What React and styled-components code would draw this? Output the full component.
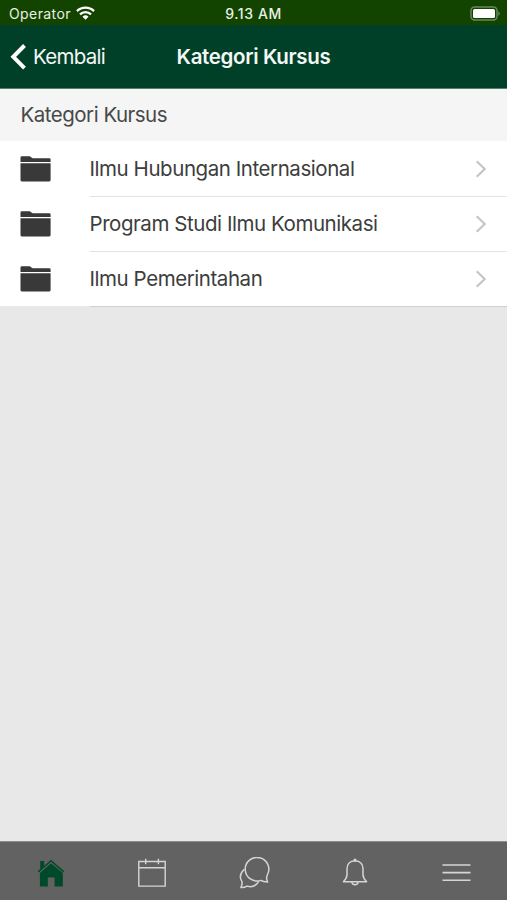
import React from 'react';
import styled, { createGlobalStyle } from 'styled-components';

const GlobalStyle = createGlobalStyle`
  * {
    box-sizing: border-box;
  }
  body {
    margin: 0;
    font-family: Inter, 'Liberation Sans', sans-serif;
    -webkit-font-smoothing: antialiased;
  }
`;

const Screen = styled.div`
  display: flex;
  flex-direction: column;
  height: 100vh;
  background-color: #e8e8e8;
`;

const StatusBar = styled.div`
  display: grid;
  grid-template-columns: 1fr auto 1fr;
  align-items: center;
  height: 25px;
  padding: 2px 7px 0 9px;
  background-color: #124400;
  color: #e9f0e5;
  flex-shrink: 0;
`;

const Carrier = styled.div`
  display: flex;
  align-items: center;
  gap: 5px;
  font-size: 14px;
  letter-spacing: 0.4px;

  svg {
    margin-top: -2px;
  }
`;

const Clock = styled.div`
  margin-left: -2px;
  font-size: 14px;
  font-weight: 500;
  letter-spacing: 0.6px;
`;

const Battery = styled.svg`
  justify-self: end;
  margin-top: -1px;
`;

const Header = styled.header`
  display: grid;
  grid-template-columns: 1fr auto 1fr;
  align-items: center;
  height: 64px;
  padding: 0 10px;
  background-color: #004028;
  border-bottom: 1px solid #557f70;
  color: #f3f7f5;
  flex-shrink: 0;
`;

const BackButton = styled.button`
  display: flex;
  align-items: center;
  justify-self: start;
  gap: 6px;
  padding: 0;
  border: none;
  background: none;
  color: inherit;
  font-family: inherit;
  font-size: 20.5px;
  letter-spacing: -0.72px;
`;

const Title = styled.h1`
  margin: 0;
  font-size: 20.5px;
  font-weight: 600;
  letter-spacing: -0.35px;
`;

const SectionTitle = styled.h2`
  display: flex;
  align-items: center;
  height: 52px;
  margin: 0;
  padding: 0 20.5px 1px;
  background-color: #f5f5f5;
  color: #484848;
  font-size: 20.5px;
  font-weight: 400;
  letter-spacing: -0.5px;
`;

const List = styled.ul`
  margin: 0;
  padding: 0;
  list-style: none;
  background-color: #fff;
`;

const RowBody = styled.div`
  display: flex;
  flex: 1;
  align-items: center;
  justify-content: space-between;
  padding-right: 20px;
  box-shadow: 0 1px 0 #e2e2e2;
  color: #3d3d3d;
  font-size: 20.5px;
  letter-spacing: -0.44px;
`;

const Row = styled.li`
  display: flex;
  height: 55px;
  padding-left: 20px;

  &:last-child ${RowBody} {
    box-shadow: 0 1px 0 #cfcfcf;
  }
`;

const RowIcon = styled.div`
  display: flex;
  align-items: center;
  width: 69.5px;
`;

const TabBar = styled.nav`
  display: flex;
  height: 59px;
  margin-top: auto;
  padding-top: 3px;
  border-top: 1px solid #8d8d8d;
  background-color: #626262;
`;

const Tab = styled.button`
  display: flex;
  flex: 1;
  align-items: center;
  justify-content: center;
  padding: 0;
  border: none;
  background: none;
  color: ${({ $active }) => ($active ? '#00492b' : '#d5d5d5')};
`;

const categories = [
  'Ilmu Hubungan Internasional',
  'Program Studi Ilmu Komunikasi',
  'Ilmu Pemerintahan',
];

const WifiIcon = () => (
  <svg width="19" height="14" viewBox="0 0 19 14" fill="none" stroke="#fff" strokeWidth="2.3">
    <path d="M1 5.1a12.2 12.2 0 0 1 17 0" />
    <path d="M4 8.4a7.8 7.8 0 0 1 11 0" />
    <path d="M9.5 13.8 6.5 10.8a4.3 4.3 0 0 1 6 0z" fill="#fff" stroke="none" />
  </svg>
);

const BatteryIcon = () => (
  <Battery width="30" height="15" viewBox="0 0 30 15">
    <rect x="1" y="1" width="26" height="13" rx="3.5" fill="none" stroke="#68875b" strokeWidth="1.5" />
    <rect x="3" y="3" width="22" height="9" rx="1.5" fill="#fff" />
    <path d="M28.3 5.2v4.6a2.5 2.5 0 0 0 0-4.6z" fill="#68875b" />
  </Battery>
);

const BackIcon = () => (
  <svg width="17" height="26" viewBox="0 0 17 26" fill="none" stroke="#fff" strokeWidth="4">
    <path d="M14.5 1.5 3.3 12.8l11.2 11.4" />
  </svg>
);

const FolderIcon = () => (
  <svg width="31" height="26" viewBox="0 0 31 26" fill="#393939">
    <path d="M.5 6V1.6Q.5.3 1.8.3h7.8q.7 0 1.2.6l1 .9q.4.4 1 .4h16.6q1.2 0 1.2 1.2V6z" />
    <path d="M.5 7.3h30.1v16.8q0 1.3-1.3 1.3H1.8Q.5 25.4.5 24.1z" />
  </svg>
);

const ChevronIcon = () => (
  <svg width="12" height="18" viewBox="0 0 12 18" fill="none" stroke="#c4c4c6" strokeWidth="2.1">
    <path d="m1.7 1.2 8 7.8-8 7.8" />
  </svg>
);

const HomeIcon = () => (
  <svg width="28" height="30" viewBox="0 0 28 30" fill="currentColor">
    <path d="M3.2 3h4v4.7L14 1.8l13.3 11.5-1 1.1L14 3.8 1.8 14.4l-1.1-1.1 2.5-2.2z" />
    <path d="M14 5.2 25.8 15v13.4h-8.2v-9h-6.8v9H2.9V15z" />
  </svg>
);

const CalendarIcon = () => (
  <svg width="28" height="30" viewBox="0 0 28 30" fill="none" stroke="currentColor" strokeWidth="1.4">
    <path d="M.8 3.5h26.4v24.6H.8zM.8 9.8h26.4M7.7.8v5.4M20.4.8v5.4" />
  </svg>
);

const ChatIcon = () => (
  <svg width="32" height="32" viewBox="0 0 32 32" fill="none" stroke="currentColor" strokeWidth="1.5" strokeLinejoin="round">
    <path d="M29.6 25.1c-3.6-.1-5.5-.8-6.8-1.7A11.8 11.8 0 1 1 29.3 18q-1.5 3.5.3 7.1z" />
    <path d="M6.3 12.2C2 16.3 1.4 20.8 4 24.8q.5 2.3-1.1 5.7c2.8.1 4.9-.6 6.2-1.4 4.5 1.3 9-.1 11.7-4.7" />
  </svg>
);

const BellIcon = () => (
  <svg width="26" height="30" viewBox="0 0 26 30" fill="none" stroke="currentColor" strokeWidth="1.5" strokeLinejoin="round">
    <path d="M13 2.7c-5.6.2-8 4-8 8.2v5.7c0 3.3-1.2 4.8-3.6 7.2h23.2c-2.4-2.4-3.6-3.9-3.6-7.2v-5.7c0-4.2-2.4-8-8-8.2z" />
    <path d="M9.8 24.2a3.3 3.5 0 0 0 6.4 0" />
    <circle cx="13" cy="2" r="1.5" fill="currentColor" stroke="none" />
  </svg>
);

const MenuIcon = () => (
  <svg width="29" height="20" viewBox="0 0 29 20" fill="none" stroke="currentColor" strokeWidth="1.6">
    <path d="M.5 2h28M.5 9.6h28M.5 17.2h28" />
  </svg>
);

const tabs = [
  { name: 'home', Icon: HomeIcon, active: true },
  { name: 'calendar', Icon: CalendarIcon },
  { name: 'messages', Icon: ChatIcon },
  { name: 'notifications', Icon: BellIcon },
  { name: 'more', Icon: MenuIcon },
];

const App = () => (
  <Screen>
    <GlobalStyle />
    <StatusBar>
      <Carrier>
        Operator
        <WifiIcon />
      </Carrier>
      <Clock>9.13 AM</Clock>
      <BatteryIcon />
    </StatusBar>
    <Header>
      <BackButton>
        <BackIcon />
        Kembali
      </BackButton>
      <Title>Kategori Kursus</Title>
    </Header>
    <SectionTitle>Kategori Kursus</SectionTitle>
    <List>
      {categories.map(name => (
        <Row key={name}>
          <RowIcon>
            <FolderIcon />
          </RowIcon>
          <RowBody>
            {name}
            <ChevronIcon />
          </RowBody>
        </Row>
      ))}
    </List>
    <TabBar>
      {tabs.map(({ name, Icon, active }) => (
        <Tab key={name} $active={active}>
          <Icon />
        </Tab>
      ))}
    </TabBar>
  </Screen>
);

export default App;
